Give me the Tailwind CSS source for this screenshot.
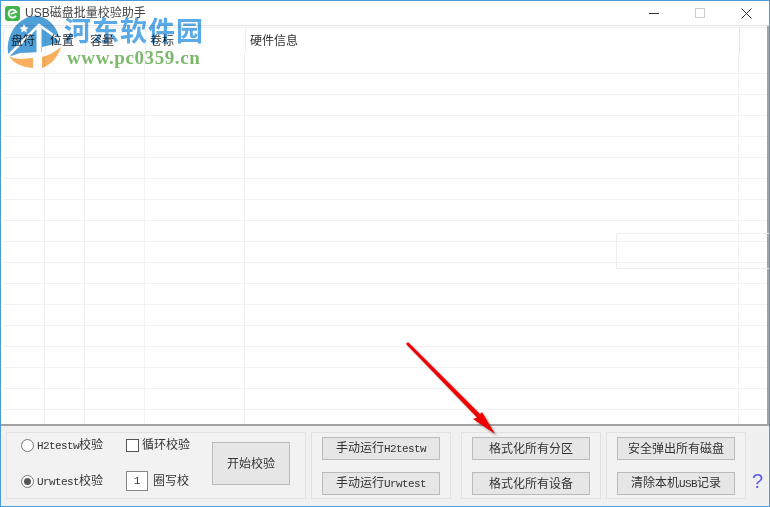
<!DOCTYPE html>
<html lang="zh-CN">
<head>
    <meta charset="UTF-8">
    <title>USB磁盘批量校验助手</title>
    <script src="https://cdn.jsdelivr.net/npm/@tailwindcss/browser@4"></script>
</head>
<body class="bg-white overflow-hidden">
    <div class="relative w-[770px] h-[507px] flex flex-col border border-[#4a9bdc] font-['Liberation_Sans','Noto_Sans_CJK_SC',sans-serif] text-[12px] text-[#333] overflow-hidden">

        <!-- title bar -->
        <div class="h-[25px] shrink-0 flex items-center border-b border-[#e4e4e4] bg-white">
            <svg class="ml-[4px] mt-[1px]" width="15" height="15" viewBox="0 0 15 15">
                <rect width="15" height="15" rx="3" fill="#3fb54a"/>
                <path d="M11 9.800A4 4 0 1 1 11.300 6L5.600 8" fill="none" stroke="#fff" stroke-width="1.800"/>
            </svg>
            <span class="ml-[5px] text-[#444] whitespace-nowrap">USB磁盘批量校验助手</span>
            <div class="ml-auto flex items-center pr-[17px] gap-[35px]">
                <svg width="11" height="11" viewBox="0 0 11 11"><path d="M0 5.500H10" stroke="#333"/></svg>
                <svg width="11" height="11" viewBox="0 0 11 11"><rect x=".5" y=".5" width="9" height="9" fill="none" stroke="#ccc"/></svg>
                <svg width="11" height="11" viewBox="0 0 11 11"><path d="M.5.5L10.500 10.500M10.500.5L.5 10.500" stroke="#333" fill="none"/></svg>
            </div>
        </div>

        <!-- disk list -->
        <div class="flex-1 min-h-0 ml-[2px] pt-[1px] border-r-2 border-[#a3a3a3]">
            <div class="grid grid-cols-[42px_40px_60px_100px_494px_1fr] h-[26px] border-t border-l border-[#eeeeee] text-[#333]">
                <div class="border-r border-[#efefef] pl-[7px] pt-[4px]">盘符</div>
                <div class="border-r border-[#efefef] pl-[4px] pt-[4px]">位置</div>
                <div class="border-r border-[#efefef] pl-[4px] pt-[4px]">容量</div>
                <div class="border-r border-[#efefef] pl-[4px] pt-[4px]">卷标</div>
                <div class="border-r border-[#e4e4e4] pl-[4px] pt-[4px]">硬件信息</div>
                <div></div>
            </div>
            <div id="rows"></div>
        </div>

        <!-- bottom panel -->
        <div class="h-[82px] shrink-0 border-t-2 border-[#a3a3a3] bg-[#f0f0f0] flex items-start pt-[6px] pl-[5px] gap-[5px]">
            <div class="w-[300px] h-[67px] border border-[#e2e2e2] bg-[#f2f2f2] flex pl-[14px] pt-[2px]">
                <div class="w-[105px] flex flex-col gap-[16px]">
                    <label class="h-[20px] flex items-center gap-[3px]">
                        <span class="w-[13px] h-[13px] rounded-full border border-[#777] bg-white"></span>
                        <span><span class="font-['Liberation_Mono',monospace] text-[11px] tracking-[-0.6px]">H2testw</span>校验</span>
                    </label>
                    <label class="h-[20px] flex items-center gap-[3px]">
                        <span class="w-[13px] h-[13px] rounded-full border border-[#777] bg-white flex items-center justify-center"><span class="w-[7px] h-[7px] rounded-full bg-[#555]"></span></span>
                        <span><span class="font-['Liberation_Mono',monospace] text-[11px] tracking-[-0.6px]">Urwtest</span>校验</span>
                    </label>
                </div>
                <div class="w-[86px] flex flex-col gap-[16px]">
                    <label class="h-[20px] flex items-center gap-[3px]">
                        <span class="w-[13px] h-[13px] border border-[#555] bg-white"></span>
                        <span>循环校验</span>
                    </label>
                    <div class="h-[20px] flex items-center gap-[5px]">
                        <span class="w-[22px] h-[20px] border border-[#888] bg-white text-center leading-[18px] font-['Liberation_Mono',monospace] text-[11px]">1</span>
                        <span>圈写校</span>
                    </div>
                </div>
                <button class="w-[78px] h-[43px] mt-[7px] border border-[#bbbbbb] bg-[#e6e6e6]">开始校验</button>
            </div>
            <div class="w-[140px] h-[67px] border border-[#e2e2e2] bg-[#f2f2f2] flex flex-col items-center gap-[12px] pt-[4px]">
                <button class="w-[118px] h-[23px] border border-[#bbbbbb] bg-[#e6e6e6] whitespace-nowrap">手动运行<span class="font-['Liberation_Mono',monospace] text-[11px] tracking-[-0.6px]">H2testw</span></button>
                <button class="w-[118px] h-[23px] border border-[#bbbbbb] bg-[#e6e6e6] whitespace-nowrap">手动运行<span class="font-['Liberation_Mono',monospace] text-[11px] tracking-[-0.6px]">Urwtest</span></button>
            </div>
            <div class="w-[140px] h-[67px] ml-[5px] border border-[#e2e2e2] bg-[#f2f2f2] flex flex-col items-center gap-[12px] pt-[4px]">
                <button class="w-[118px] h-[23px] border border-[#bbbbbb] bg-[#e6e6e6]">格式化所有分区</button>
                <button class="w-[118px] h-[23px] border border-[#bbbbbb] bg-[#e6e6e6]">格式化所有设备</button>
            </div>
            <div class="w-[140px] h-[67px] border border-[#e2e2e2] bg-[#f2f2f2] flex flex-col items-center gap-[12px] pt-[4px]">
                <button class="w-[118px] h-[23px] border border-[#bbbbbb] bg-[#e6e6e6]">安全弹出所有磁盘</button>
                <button class="w-[118px] h-[23px] border border-[#bbbbbb] bg-[#e6e6e6] whitespace-nowrap">清除本机<span class="font-['Liberation_Mono',monospace] text-[11px] tracking-[-0.6px]">USB</span>记录</button>
            </div>
            <span class="mt-[38px] ml-[1px] text-[20px] leading-[22px] text-[#5a5af0] font-['Liberation_Sans',sans-serif]">?</span>
        </div>

        <!-- faint rectangle left on the list -->
        <div class="absolute left-[615px] top-[232px] w-[153px] h-[36px] border border-r-0 border-[#eeeeee]"></div>

        <!-- watermark -->
        <svg class="absolute left-[5px] top-[12px] mix-blend-multiply" width="60" height="58" viewBox="0 0 60 58">
            <path d="M2 40C0 18 15 3 29 3C40 3 50 11 53 24L53 30L36 34L36 39L14 40L5 43Z" fill="#4f9fd8"/>
            <path d="M3 42L33 12L54 27" fill="none" stroke="#fff" stroke-width="2.500"/>
            <path d="M33 14V42" fill="none" stroke="#fff" stroke-width="5"/>
            <path d="M18 11l1.500 3 3 .5-2.200 2 .5 3-2.800-1.500-2.800 1.500.5-3-2.200-2 3-.5z" fill="#fff"/>
            <path d="M3 43C10 47 18 46 27 45L27 55C15 54 7 50 3 43Z" fill="#f8ae5c"/>
            <path d="M36 55L36 44C44 42 50 38 55 34C52 44 45 52 36 55Z" fill="#f8ae5c"/>
        </svg>
        <div class="absolute left-[63px] top-[9px] mix-blend-multiply text-[27px] leading-[40px] font-bold text-[#5aaae8] whitespace-nowrap font-['Noto_Sans_CJK_SC',sans-serif] tracking-[1px]">河东软件园</div>
        <div class="absolute left-[66px] top-[47px] text-[19px] leading-[20px] font-bold text-[#7cb96c] whitespace-nowrap font-['Liberation_Serif',serif] tracking-[0.6px]">www.pc0359.cn</div>

        <!-- red arrow -->
        <svg class="absolute left-[395px] top-[332px] drop-shadow-[2px_2px_1px_rgba(0,0,0,0.35)]" width="115" height="115" viewBox="0 0 115 115">
            <path d="M10 11L12 9L84 81L86 79L99 101L77 86L81 84.500Z" fill="#f00000"/>
        </svg>
    </div>

    <script>
        // list is empty, only the grid lines are drawn
        const rows = document.getElementById('rows');
        for (let i = 0; i < 18; i++) {
            const row = document.createElement('div');
            row.className = 'grid grid-cols-[42px_40px_60px_100px_494px_1fr] h-[21px] border-b border-[#f1f1f1]';
            row.innerHTML = '<div class="border-r border-[#f1f1f1]"></div>'.repeat(5);
            rows.appendChild(row);
        }
    </script>
</body>
</html>
